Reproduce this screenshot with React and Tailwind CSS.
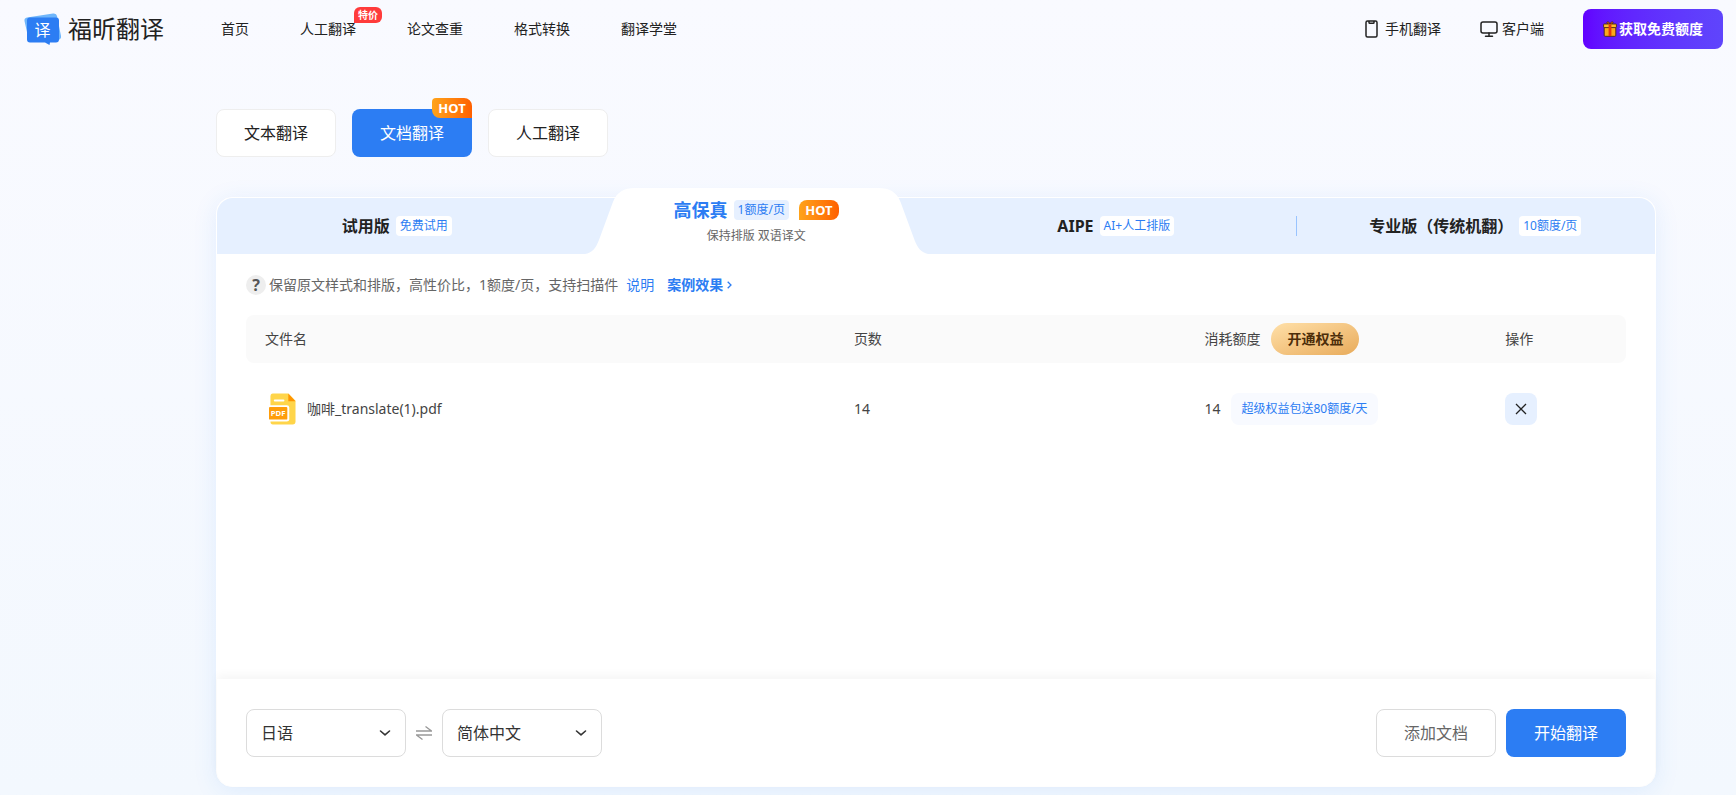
import React from 'react';

const navLinks = [
    { label: '首页' },
    { label: '人工翻译', tag: '特价' },
    { label: '论文查重' },
    { label: '格式转换' },
    { label: '翻译学堂' }
];

const modes = [
    { label: '文本翻译' },
    { label: '文档翻译', active: true },
    { label: '人工翻译' }
];

const LogoMark = () => (
    <svg width="38" height="32" viewBox="0 0 38 32" aria-hidden="true">
        <path d="M0.5 8 Q0 5 3 4.500 L29 0.500 Q32.500 0 33 3 L37 23 Q37.500 26 34 27 L5 28 Z" fill="#6fb6fb" />
        <path d="M6 4.500 H32 Q35 4.500 35 7.500 V26.500 Q35 29.500 32 29.500 H26 L25.500 32 L21 29.500 H6 Q3 29.500 3 26.500 V7.500 Q3 4.500 6 4.500 Z" fill="#2c7df3" />
        <text x="18.500" y="23" textAnchor="middle" fontSize="16" fill="#fff">译</text>
    </svg>
);

const PhoneIcon = () => (
    <svg width="13" height="18" viewBox="0 0 13 18" fill="none" stroke="#222" strokeWidth="1.500" aria-hidden="true">
        <rect x="1" y="1" width="11" height="16" rx="1.500" />
        <path d="M4 1 V2.500 Q4 3.300 4.800 3.300 H8.200 Q9 3.300 9 2.500 V1" />
    </svg>
);

const MonitorIcon = () => (
    <svg width="18" height="18" viewBox="0 0 18 18" fill="none" stroke="#222" strokeWidth="1.500" strokeLinecap="round" aria-hidden="true">
        <rect x="1" y="2" width="16" height="11" rx="2" />
        <path d="M9 13 V16 M5.500 16.300 H12.500" />
    </svg>
);

const GiftIcon = () => (
    <svg width="14" height="16" viewBox="0 0 14 16" aria-hidden="true">
        <path d="M7 3.500 C4 3.500 3 1 4.500 0.900 C6 0.800 7 2 7 3.500 C7 2 8 0.800 9.500 0.900 C11 1 10 3.500 7 3.500 Z" fill="#f7630c" stroke="#4a2a12" strokeWidth="0.800" />
        <rect x="1.200" y="6" width="11.600" height="9.300" rx="1" fill="#fba91c" stroke="#4a2a12" strokeWidth="0.900" />
        <rect x="0.600" y="3" width="12.800" height="3.600" rx="0.800" fill="#fdb92e" stroke="#4a2a12" strokeWidth="0.900" />
        <rect x="5.600" y="3.300" width="2.800" height="11.700" fill="#e8380d" />
    </svg>
);

const PdfIcon = () => (
    <svg width="27" height="32" viewBox="0 0 28 32" aria-hidden="true">
        <path d="M4 0 H20 L27.500 7.500 V29 Q27.500 32 24.500 32 H4 Q1.500 32 1.500 29 V3 Q1.500 0 4 0 Z" fill="#ffd54a" />
        <path d="M20 0 L27.500 8 H20 Z" fill="#ff9500" />
        <path d="M6 7.200 H15" stroke="#fff" strokeWidth="2" strokeLinecap="round" />
        <path d="M0 12 H18.500 Q21 12 21 14.500 V26.500 Q21 29 18.500 29 H0 Z" fill="#fff" />
        <rect x="0" y="14" width="19" height="13" rx="1" fill="#ff9d0a" />
        <text x="9.500" y="23.500" textAnchor="middle" fontSize="8" fontWeight="700" fill="#fff">PDF</text>
    </svg>
);

const ChevronDown = () => (
    <svg width="12" height="8" viewBox="0 0 12 8" fill="none" stroke="#333" strokeWidth="1.600" strokeLinecap="round" strokeLinejoin="round" className="pointer-events-none absolute right-[15px] top-5" aria-hidden="true">
        <path d="M1.500 2 L6 5.800 L10.500 2" />
    </svg>
);

const SwapIcon = () => (
    <svg width="16" height="14" viewBox="0 0 16 14" fill="none" stroke="#999" strokeWidth="1.300" aria-hidden="true">
        <path d="M0 5 H15.500 L9.500 0.500 M16 9 H0.500 L6.500 13.500" />
    </svg>
);

// Raised white shape behind the selected plan
const TabShape = () => (
    <svg viewBox="0 0 344 66" preserveAspectRatio="none" className="absolute bottom-0 left-2 h-[66px] w-[calc(100%-16px)]" aria-hidden="true">
        <path d="M0 66 C7 65 11 60 14 52 L28 14 C32 4 39 0 50 0 H294 C305 0 312 4 316 14 L330 52 C333 60 337 65 344 66 Z" fill="#fff" />
    </svg>
);

const Tag = ({ children }) => (
    <span className="h-5 rounded bg-white px-1 text-xs leading-5 font-normal text-[#2c7df3]">{children}</span>
);

const LanguageSelect = ({ label, options }) => (
    <div className="relative w-40">
        <select aria-label={label} className="h-12 w-full appearance-none rounded-lg border border-[#dcdcdc] bg-white px-[14px] text-base text-[#333]">
            {options.map((option) => <option key={option}>{option}</option>)}
        </select>
        <ChevronDown />
    </div>
);

const Header = () => (
    <header className="flex h-[58px] items-center pr-[13px] pl-6 text-sm text-[#222]">
        <a href="#" className="flex items-center gap-[6px]">
            <LogoMark />
            <span className="text-2xl leading-8 text-[#222]">福昕翻译</span>
        </a>
        <nav className="ml-[57px] flex items-center gap-[51px]">
            {navLinks.map((link) => (
                <a key={link.label} href="#" className="relative">
                    {link.label}
                    {link.tag && (
                        <span className="absolute -top-3 left-[54px] h-4 w-7 rounded-md rounded-bl-none bg-[#ff3b3b] text-center text-[10px] leading-4 font-bold text-white">{link.tag}</span>
                    )}
                </a>
            ))}
        </nav>
        <div className="ml-auto flex items-center">
            <a href="#" className="mr-[39px] flex items-center gap-[7px]"><PhoneIcon />手机翻译</a>
            <a href="#" className="mr-[39px] flex items-center gap-1"><MonitorIcon />客户端</a>
            <button type="button" className="flex h-10 w-[140px] items-center justify-center gap-[2px] rounded-lg bg-linear-to-r from-[#6200ff] to-[#5f45fc] font-bold text-white">
                <GiftIcon />获取免费额度
            </button>
        </div>
    </header>
);

const PlanTabs = () => (
    <div className="grid h-14 grid-cols-4 rounded-t-2xl bg-[#e6f0ff] text-base font-bold text-[#222]">
        <button type="button" className="flex items-center justify-center gap-[6px]">试用版<Tag>免费试用</Tag></button>
        <button type="button" className="relative">
            <TabShape />
            <span className="absolute inset-x-0 -top-2 bottom-0 flex flex-col items-center pt-[6px]">
                <span className="flex items-center text-lg leading-7 text-[#2c7df3]">
                    高保真
                    <span className="ml-[6px] h-5 rounded bg-[#e6f0ff] px-1 text-xs leading-5 font-normal">1额度/页</span>
                    <span className="ml-[10px] h-5 w-10 rounded-lg rounded-bl-none bg-linear-to-r from-[#ffa31a] to-[#ff5f00] text-[13px] leading-5 text-white">HOT</span>
                </span>
                <span className="text-xs leading-6 font-normal text-[#666]">保持排版 双语译文</span>
            </span>
        </button>
        <button type="button" className="flex items-center justify-center gap-[6px]">AIPE<Tag>AI+人工排版</Tag></button>
        <button type="button" className="relative flex items-center justify-center gap-[6px]">
            <span className="absolute top-[18px] left-0 h-5 w-px bg-[#99c4ff]" />
            专业版（传统机翻）<Tag>10额度/页</Tag>
        </button>
    </div>
);

const FileTable = () => (
    <table className="w-full table-fixed text-left text-sm text-[#444]">
        <thead>
            <tr className="h-12 bg-[#fafafa]">
                <th className="w-[42.6%] rounded-l-lg pl-[19px] font-normal">文件名</th>
                <th className="w-[25.4%] pl-5 font-normal">页数</th>
                <th className="w-[21.8%] pl-5 font-normal">
                    <div className="flex items-center gap-[11px]">
                        消耗额度
                        <button type="button" className="h-8 w-[88px] rounded-full bg-linear-to-br from-[#ffe0a8] to-[#e8ab5a] font-bold text-[#4d2e0a]">开通权益</button>
                    </div>
                </th>
                <th className="rounded-r-lg pl-5 font-normal">操作</th>
            </tr>
        </thead>
        <tbody>
            <tr className="h-[92px]">
                <td className="pl-[23px]">
                    <div className="flex items-center gap-[11px]"><PdfIcon />咖啡_translate(1).pdf</div>
                </td>
                <td className="pl-5">14</td>
                <td className="pl-5">
                    <div className="flex items-center gap-[11px]">
                        14
                        <a href="#" className="rounded-lg bg-[#f8faff] px-[10px] text-xs leading-8 text-[#2c7df3]">超级权益包送80额度/天</a>
                    </div>
                </td>
                <td className="pl-5">
                    <button type="button" aria-label="删除" className="flex size-8 items-center justify-center rounded-lg bg-[#e6f0ff]">
                        <svg width="12" height="12" viewBox="0 0 12 12" stroke="#222" strokeWidth="1.300" aria-hidden="true">
                            <path d="M1 1 L11 11 M11 1 L1 11" />
                        </svg>
                    </button>
                </td>
            </tr>
        </tbody>
    </table>
);

const App = () => {
    return (
        <div className="flex min-h-screen flex-col bg-linear-to-b from-[#f9faff] to-[#f3f8fe] font-['Noto_Sans','Noto_Sans_CJK_SC',sans-serif]">
            <Header />
            <main className="flex flex-1 flex-col pt-[51px] pr-20 pb-2 pl-[216px]">
                <div className="mb-10 flex gap-4">
                    {modes.map((mode) => (
                        <button
                            key={mode.label}
                            type="button"
                            className={mode.active
                                ? 'relative h-12 w-[120px] rounded-lg bg-[#2c7df3] text-base text-white'
                                : 'h-12 w-[120px] rounded-lg border border-[#eee] bg-white text-base text-[#222]'}
                        >
                            {mode.label}
                            {mode.active && (
                                <span className="absolute -top-[11px] right-0 h-5 w-10 rounded-tl-sm rounded-tr-lg rounded-bl-lg bg-linear-to-r from-[#ffa31a] to-[#ff5f00] text-[13px] leading-5 font-bold">HOT</span>
                            )}
                        </button>
                    ))}
                </div>

                <section className="flex flex-1 flex-col rounded-2xl border border-white bg-white shadow-[0_4px_24px_rgba(44,125,243,0.1)]">
                    <PlanTabs />
                    <div className="flex-1 px-[29px] pt-5">
                        <div className="mb-[19px] flex h-[22px] items-center text-sm text-[#666]">
                            <span className="mr-[3px] size-5 rounded-full bg-[#eee] text-center text-base leading-5 font-bold text-[#555]">?</span>
                            保留原文样式和排版，高性价比，1额度/页，支持扫描件
                            <a href="#" className="ml-2 text-[#2c7df3]">说明</a>
                            <a href="#" className="ml-[13px] flex items-center gap-1 font-bold text-[#2c7df3]">
                                案例效果
                                <svg width="5" height="8" viewBox="0 0 5 8" fill="none" stroke="#2c7df3" strokeWidth="1.300" aria-hidden="true">
                                    <path d="M0.700 0.700 L4 4 L0.700 7.300" />
                                </svg>
                            </a>
                        </div>
                        <FileTable />
                    </div>
                    <footer className="flex items-center rounded-b-2xl bg-white px-[29px] pt-[30px] pb-[29px] shadow-[0_-4px_10px_rgba(0,0,0,0.04)]">
                        <LanguageSelect label="源语言" options={['日语', '英语', '简体中文']} />
                        <button type="button" aria-label="交换语言" className="mx-[10px]"><SwapIcon /></button>
                        <LanguageSelect label="目标语言" options={['简体中文', '英语', '日语']} />
                        <button type="button" className="mr-[10px] ml-auto h-12 w-[120px] rounded-lg border border-[#dcdcdc] bg-white text-base text-[#666]">添加文档</button>
                        <button type="button" className="h-12 w-[120px] rounded-lg bg-[#2c7df3] text-base text-white">开始翻译</button>
                    </footer>
                </section>
            </main>
        </div>
    );
};

export default App;
